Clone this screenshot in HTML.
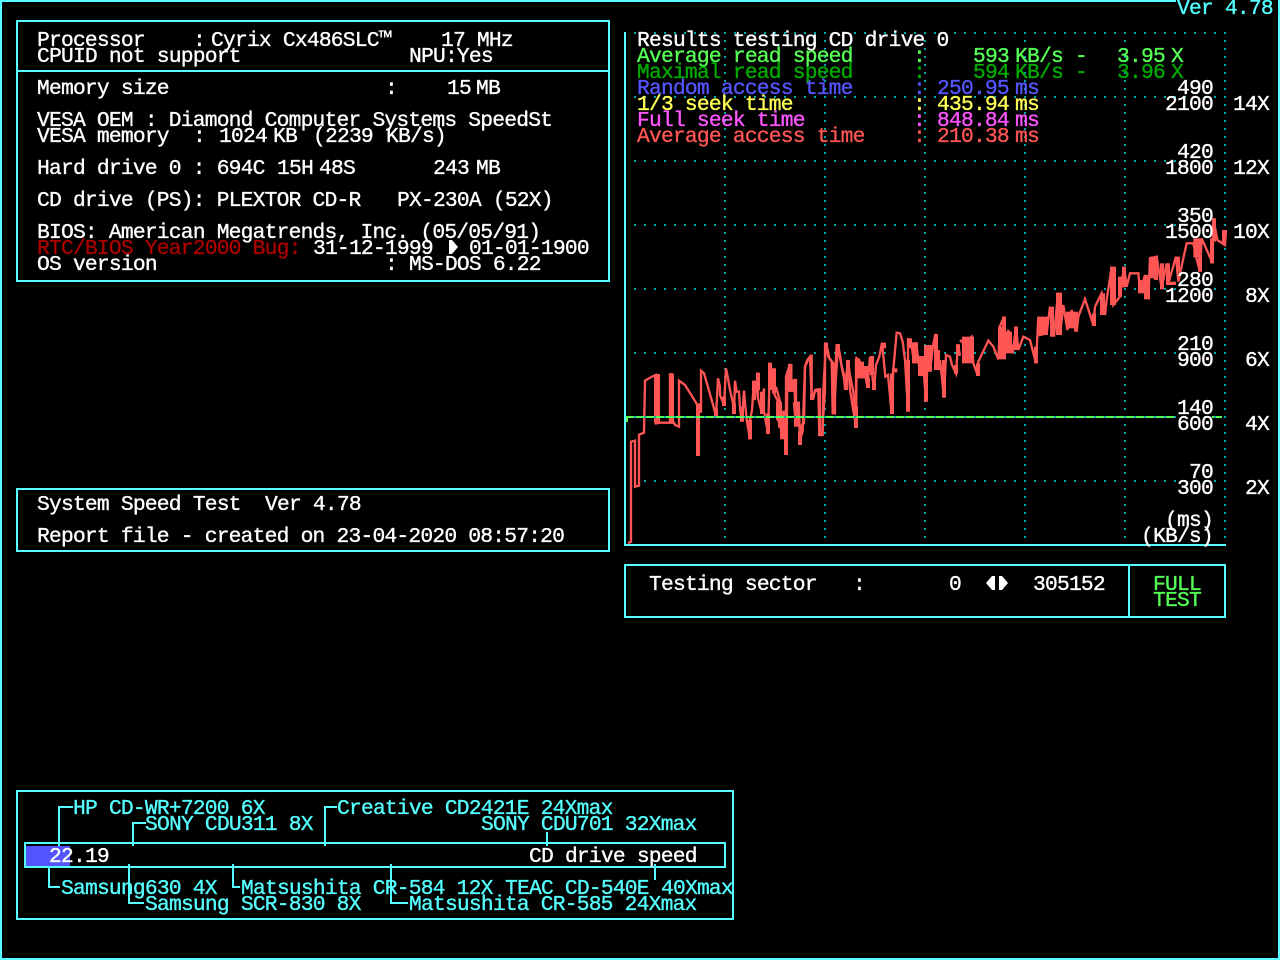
<!DOCTYPE html>
<html><head><meta charset="utf-8"><title>System Speed Test</title>
<style>
html,body{margin:0;padding:0;background:#000;width:1280px;height:960px;overflow:hidden}
svg{display:block}
text{font-family:"Liberation Mono",monospace;font-size:21.3px;letter-spacing:-.8px;white-space:pre;fill:#fff;stroke:#fff;stroke-width:.35px}
.c text{fill:#55ffff;stroke:#55ffff}
text.g{fill:#55ff55;stroke:#55ff55}text.dg{fill:#00aa00;stroke:#00aa00}text.b{fill:#5555ff;stroke:#5555ff}text.y{fill:#ffff55;stroke:#ffff55}text.m{fill:#ff55ff;stroke:#ff55ff}text.r{fill:#ff5555;stroke:#ff5555}text.dr{fill:#aa0000;stroke:#aa0000}
.t polyline{fill:none;stroke:#ff5555;stroke-width:7;stroke-linejoin:miter}
.t{fill:#ff5555}
</style></head><body>
<svg width="1280" height="960" viewBox="0 0 1280 960" xmlns="http://www.w3.org/2000/svg">
<defs>
<pattern id="h" x="0" y="0" width="10" height="64" patternUnits="userSpaceOnUse"><rect x="4" y="32" width="2" height="2" fill="#00aaaa"/></pattern>
<pattern id="v" x="0" y="0" width="100" height="8" patternUnits="userSpaceOnUse"><rect x="24" y="0" width="2" height="2" fill="#00aaaa"/></pattern>
</defs>
<rect width="1280" height="960" fill="#000"/>
<g fill="#55ffff" shape-rendering="crispEdges">
<rect x="0" y="0" width="1176" height="2"/><rect x="0" y="0" width="2" height="960"/><rect x="0" y="958" width="1280" height="2"/><rect x="1278" y="0" width="2" height="960"/>
<rect x="16" y="20" width="594" height="2"/><rect x="16" y="70" width="594" height="2"/><rect x="16" y="280" width="594" height="2"/><rect x="16" y="20" width="2" height="262"/><rect x="608" y="20" width="2" height="262"/>
<rect x="16" y="488" width="594" height="2"/><rect x="16" y="550" width="594" height="2"/><rect x="16" y="488" width="2" height="64"/><rect x="608" y="488" width="2" height="64"/>
<rect x="624" y="32" width="2" height="514"/><rect x="624" y="544" width="602" height="2"/>
<rect x="624" y="564" width="602" height="2"/><rect x="624" y="616" width="602" height="2"/><rect x="624" y="564" width="2" height="54"/><rect x="1224" y="564" width="2" height="54"/><rect x="1128" y="564" width="2" height="54"/>
<rect x="16" y="790" width="718" height="2"/><rect x="16" y="918" width="718" height="2"/><rect x="16" y="790" width="2" height="130"/><rect x="732" y="790" width="2" height="130"/>
<rect x="24" y="842" width="702" height="2"/><rect x="24" y="866" width="702" height="2"/><rect x="24" y="842" width="2" height="26"/><rect x="724" y="842" width="2" height="26"/>
<rect x="58" y="806" width="2" height="40"/><rect x="58" y="806" width="15" height="2"/>
<rect x="132" y="822" width="2" height="24"/><rect x="132" y="822" width="14" height="2"/>
<rect x="324" y="806" width="2" height="40"/><rect x="324" y="806" width="13" height="2"/>
<rect x="546" y="832" width="2" height="14"/>
<rect x="48" y="864" width="2" height="24"/><rect x="48" y="886" width="12" height="2"/>
<rect x="128" y="864" width="2" height="40"/><rect x="128" y="902" width="16" height="2"/>
<rect x="232" y="864" width="2" height="24"/><rect x="232" y="886" width="8" height="2"/>
<rect x="390" y="864" width="2" height="40"/><rect x="390" y="902" width="18" height="2"/>
<rect x="654" y="864" width="2" height="16"/>
</g>
<rect x="26" y="846" width="44" height="20" fill="#5555ff"/>
<rect x="626" y="32" width="600" height="508" fill="url(#h)"/>
<rect x="626" y="40" width="610" height="500" fill="url(#v)"/>
<rect x="1224" y="32" width="2" height="2" fill="#00aaaa"/>

<g transform="translate(620 340) scale(.33333)" class="t">
<polyline points="24,610 33,605 33,305 45,302 45,440 57,437 57,284 72,278 75,122 96,110 108,105 108,250 120,248 150,248 150,103 156,103 156,248 162,248 165,255 177,260 177,122 195,135 222,178 232,195 236,345 236,215 243,215 243,92 252,100 265,145 282,205 288,228 294,115 300,140 300,165 312,195 318,85 324,115 330,150 338,185 342,220 345,122 350,155 357,155 360,205 366,245 372,152 376,200 381,245 390,298 390,240 396,210 402,122 404,180 414,98 414,175 426,220 432,145 432,215 444,280 450,68 450,148 462,85 462,160 474,185 474,240 486,260 480,190"/>
<rect x="102" y="102" width="18" height="148"/><rect x="150" y="102" width="12" height="148"/><rect x="228" y="190" width="12" height="158"/><rect x="282" y="205" width="12" height="23"/><rect x="306" y="170" width="12" height="28"/><rect x="336" y="190" width="12" height="32"/><rect x="360" y="200" width="12" height="45"/><rect x="384" y="240" width="12" height="58"/><rect x="396" y="122" width="12" height="58"/><rect x="408" y="98" width="12" height="52"/><rect x="420" y="155" width="12" height="67"/><rect x="438" y="220" width="12" height="62"/><rect x="444" y="68" width="12" height="82"/><rect x="456" y="85" width="12" height="75"/><rect x="468" y="185" width="12" height="55"/>
<polyline points="480,190 498,298 498,110 510,72 510,155 522,122 528,232 536,185 540,298 548,275 555,80 564,60 575,50 575,178 585,155 600,148 600,285 608,285 610,150 618,8 625,50 640,70 642,220 648,112 654,15 660,45 666,85 678,148 684,62 690,105 700,155 708,262 708,55"/>
<rect x="480" y="215" width="24" height="83"/><rect x="504" y="72" width="12" height="38"/><rect x="510" y="122" width="18" height="33"/><rect x="522" y="185" width="18" height="47"/><rect x="534" y="275" width="12" height="23"/><rect x="570" y="165" width="12" height="13"/><rect x="594" y="280" width="12" height="8"/><rect x="612" y="8" width="12" height="14"/><rect x="636" y="110" width="12" height="112"/><rect x="648" y="12" width="12" height="30"/><rect x="672" y="105" width="12" height="45"/><rect x="678" y="60" width="12" height="45"/><rect x="702" y="198" width="12" height="66"/>
</g>
<g transform="translate(780 310) scale(.33333)" class="t">
<polyline points="-12,230 0,275 0,352 12,352 12,305 20,305 20,390 22,200 28,165 34,165 34,245 42,210 48,210 48,350 42,280 56,280 60,390 66,345 72,340 75,170 82,150 90,140 95,265 100,265 105,240 115,238 118,375 126,375 135,240 135,98 142,115 148,145 155,155 158,310 165,310 165,205 170,103 178,133 185,170 192,195 195,238 204,150 210,240 218,290 228,350 230,145 240,155 246,205 252,170 262,232 270,140 282,240 288,165 298,140 306,98 316,200 324,195 335,310 340,178 350,68 360,70 368,95 375,150 384,305 384,85 396,115 402,160 408,97 414,140 420,195 432,195 438,275 444,105 450,185 458,115 466,72 474,180 480,150 492,262 498,135 510,140 516,165 528,190 534,103 540,137"/>
<rect x="-6" y="275" width="12" height="77"/><rect x="0" y="305" width="24" height="47"/><rect x="12" y="305" width="12" height="130"/><rect x="24" y="162" width="12" height="83"/><rect x="30" y="210" width="18" height="35"/><rect x="42" y="275" width="18" height="75"/><rect x="54" y="365" width="12" height="40"/><rect x="90" y="250" width="12" height="20"/><rect x="114" y="370" width="12" height="8"/><rect x="132" y="98" width="12" height="27"/><rect x="156" y="205" width="12" height="105"/><rect x="168" y="103" width="12" height="30"/><rect x="192" y="195" width="12" height="45"/><rect x="198" y="150" width="12" height="45"/><rect x="222" y="290" width="12" height="64"/><rect x="228" y="145" width="12" height="60"/><rect x="240" y="155" width="12" height="50"/><rect x="252" y="168" width="12" height="37"/><rect x="258" y="205" width="12" height="29"/><rect x="270" y="138" width="12" height="57"/><rect x="276" y="205" width="12" height="35"/><rect x="306" y="98" width="12" height="17"/><rect x="330" y="190" width="12" height="122"/><rect x="336" y="175" width="16" height="12"/><rect x="378" y="150" width="12" height="155"/><rect x="384" y="85" width="12" height="30"/><rect x="396" y="97" width="18" height="63"/><rect x="414" y="138" width="18" height="60"/><rect x="432" y="105" width="12" height="170"/><rect x="444" y="105" width="12" height="80"/><rect x="462" y="72" width="12" height="108"/><rect x="468" y="120" width="12" height="60"/><rect x="486" y="150" width="12" height="113"/><rect x="522" y="165" width="12" height="27"/><rect x="528" y="103" width="12" height="34"/>
</g>
<g transform="translate(930 200) scale(.33333)" class="t">
<polyline points="90,420 100,430 125,410 130,490 143,525 145,485 175,422 190,440 205,478 210,378 222,350 222,445 235,390 248,460 258,380 265,450 280,410 300,420 318,490 325,350 330,405 350,400 360,320 372,410 384,278 390,405 400,315 412,390 425,330 440,395 445,350 465,297 490,375 495,320 515,280 525,345 530,300 545,200 550,315 570,290 582,200 590,260 600,220 625,220 630,275 645,225 655,298 660,175 680,170 695,265 710,190 715,250 738,170 745,245 760,175 770,130 790,130 798,170 810,215 815,115 848,190 850,55 862,120 885,135 888,90"/>
<rect x="96" y="410" width="36" height="80"/><rect x="138" y="490" width="12" height="38"/><rect x="204" y="380" width="24" height="98"/><rect x="216" y="350" width="12" height="30"/><rect x="228" y="395" width="18" height="65"/><rect x="252" y="380" width="12" height="70"/><rect x="312" y="440" width="12" height="50"/><rect x="324" y="350" width="30" height="55"/><rect x="360" y="320" width="12" height="90"/><rect x="378" y="278" width="18" height="127"/><rect x="408" y="335" width="36" height="50"/><rect x="432" y="350" width="12" height="45"/><rect x="486" y="340" width="12" height="38"/><rect x="510" y="280" width="15" height="65"/><rect x="540" y="200" width="18" height="115"/><rect x="564" y="230" width="12" height="60"/><rect x="576" y="200" width="12" height="62"/><rect x="624" y="240" width="18" height="40"/><rect x="642" y="225" width="18" height="73"/><rect x="660" y="170" width="12" height="65"/><rect x="672" y="170" width="12" height="70"/><rect x="690" y="190" width="12" height="78"/><rect x="708" y="190" width="12" height="65"/><rect x="720" y="245" width="18" height="10"/><rect x="738" y="170" width="12" height="45"/><rect x="790" y="115" width="14" height="57"/><rect x="804" y="115" width="12" height="100"/><rect x="840" y="115" width="12" height="75"/><rect x="846" y="55" width="12" height="70"/><rect x="876" y="90" width="12" height="45"/>
</g>
<g shape-rendering="crispEdges">
<rect x="626" y="416" width="550" height="2" fill="#55ff55"/><rect x="1212" y="416" width="10" height="2" fill="#55ff55"/><rect x="626" y="416" width="2" height="6" fill="#55ff55"/>
<rect x="628" y="416" width="596" height="2" fill="url(#h)"/>
</g>

<g transform="translate(1 0)">
<g class="c">
<text x="1176" y="14">Ver 4.78</text>
<text x="72" y="814">HP CD-WR+7200 6X</text><text x="336" y="814">Creative CD2421E 24Xmax</text>
<text x="144" y="830">SONY CDU311 8X</text><text x="480" y="830">SONY CDU701 32Xmax</text>
<text x="60" y="894">Samsung630 4X</text><text x="240" y="894">Matsushita CR-584 12X</text><text x="504" y="894">TEAC CD-540E</text><text x="660" y="894">40Xmax</text>
<text x="144" y="910">Samsung SCR-830 8X</text><text x="408" y="910">Matsushita CR-585 24Xmax</text>
</g>
<text x="48" y="862">22.19</text><text x="528" y="862">CD drive speed</text>

<text x="36" y="46">Processor</text><text x="192" y="46">:</text><text x="210" y="46">Cyrix Cx486SLC™</text><text x="440" y="46">17 MHz</text>
<text x="36" y="62">CPUID not support</text><text x="408" y="62">NPU:Yes</text>
<text x="36" y="94">Memory size</text><text x="384" y="94">:</text><text x="446" y="94">15</text><text x="475" y="94">MB</text>
<text x="36" y="126">VESA OEM : Diamond Computer Systems SpeedSt</text>
<text x="36" y="142">VESA memory</text><text x="192" y="142">:</text><text x="218" y="142">1024</text><text x="272" y="142">KB</text><text x="312" y="142">(2239</text><text x="385" y="142">KB/s)</text>
<text x="36" y="174">Hard drive 0 : 694C</text><text x="276" y="174">15H</text><text x="318" y="174">48S</text><text x="432" y="174">243</text><text x="475" y="174">MB</text>
<text x="36" y="206">CD drive (PS): PLEXTOR CD-R</text><text x="396" y="206">PX-230A (52X)</text>
<text x="36" y="238">BIOS: American Megatrends, Inc. (05/05/91)</text>
<text x="36" y="254" class="dr">RTC/BIOS Year2000 Bug:</text><text x="312" y="254">31-12-1999</text><text x="468" y="254">01-01-1900</text>
<text x="36" y="270">OS version</text><text x="384" y="270">: MS-DOS 6.22</text>

<text x="36" y="510">System Speed Test</text><text x="264" y="510">Ver 4.78</text>
<text x="36" y="542">Report file - created on 23-04-2020 08:57:20</text>

<text x="636" y="46">Results testing CD drive 0</text>
<text x="636" y="62" class="g">Average read speed</text><text x="912" y="62" class="g">:</text><text x="972" y="62" class="g">593</text><text x="1014" y="62" class="g">KB/s</text><text x="1074" y="62" class="g">-</text><text x="1116" y="62" class="g">3.95</text><text x="1170" y="62" class="g">X</text>
<text x="636" y="78" class="dg">Maximal read speed</text><text x="912" y="78" class="dg">:</text><text x="972" y="78" class="dg">594</text><text x="1014" y="78" class="dg">KB/s</text><text x="1074" y="78" class="dg">-</text><text x="1116" y="78" class="dg">3.96</text><text x="1170" y="78" class="dg">X</text>
<text x="636" y="94" class="b">Random access time</text><text x="912" y="94" class="b">:</text><text x="936" y="94" class="b">250.95</text><text x="1014" y="94" class="b">ms</text>
<text x="636" y="110" class="y">1/3 seek time</text><text x="912" y="110" class="y">:</text><text x="936" y="110" class="y">435.94</text><text x="1014" y="110" class="y">ms</text>
<text x="636" y="126" class="m">Full seek time</text><text x="912" y="126" class="m">:</text><text x="936" y="126" class="m">848.84</text><text x="1014" y="126" class="m">ms</text>
<text x="636" y="142" class="r">Average access time</text><text x="912" y="142" class="r">:</text><text x="936" y="142" class="r">210.38</text><text x="1014" y="142" class="r">ms</text>

<text x="1176" y="94">490</text><text x="1164" y="110">2100</text><text x="1232" y="110">14X</text>
<text x="1176" y="158">420</text><text x="1164" y="174">1800</text><text x="1232" y="174">12X</text>
<text x="1176" y="222">350</text><text x="1164" y="238">1500</text><text x="1232" y="238">10X</text>
<text x="1176" y="286">280</text><text x="1164" y="302">1200</text><text x="1244" y="302">8X</text>
<text x="1176" y="350">210</text><text x="1176" y="366">900</text><text x="1244" y="366">6X</text>
<text x="1176" y="414">140</text><text x="1176" y="430">600</text><text x="1244" y="430">4X</text>
<text x="1188" y="478">70</text><text x="1176" y="494">300</text><text x="1244" y="494">2X</text>
<text x="1164" y="526">(ms)</text><text x="1140" y="542">(KB/s)</text>

<text x="648" y="590">Testing sector</text><text x="852" y="590">:</text><text x="948" y="590">0</text><text x="1032" y="590">305152</text>
<text x="1152" y="590" class="g">FULL</text><text x="1152" y="606" class="g">TEST</text>
</g>
<polygon points="449,240 452,240 458,247 452,254 449,254" fill="#fff"/>
<polygon points="995,576 992,576 986,583 992,590 995,590" fill="#fff"/><polygon points="999,576 1002,576 1008,583 1002,590 999,590" fill="#fff"/>
</svg>
</body></html>
